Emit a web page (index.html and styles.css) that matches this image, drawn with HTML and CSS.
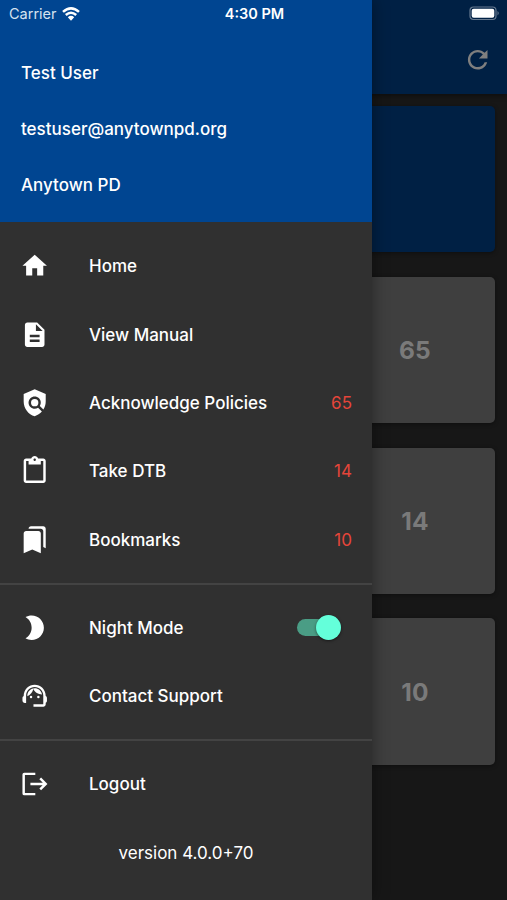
FILE: index.html
```
<!DOCTYPE html>
<html lang="en">
<head>
    <meta charset="UTF-8">
    <meta name="viewport" content="width=device-width, initial-scale=1.0">
    <title>Anytown PD</title>
    <link rel="stylesheet" href="styles.css">
</head>
<body>

    <div class="page">
        <header class="app-bar">
            <svg class="icon" viewBox="0 0 24 24"><path d="M17.65 6.35C16.2 4.9 14.21 4 12 4c-4.42 0-7.99 3.58-7.99 8s3.57 8 7.99 8c3.73 0 6.84-2.55 7.73-6h-2.08c-.82 2.33-3.04 4-5.65 4-3.31 0-6-2.69-6-6s2.69-6 6-6c1.66 0 3.14.69 4.22 1.78L13 11h7V4l-2.35 2.35z"/></svg>
        </header>
        <main class="cards">
            <div class="card card-blue"></div>
            <div class="card"><span class="count">65</span></div>
            <div class="card"><span class="count">14</span></div>
            <div class="card"><span class="count">10</span></div>
        </main>
    </div>

    <!-- Drawer -->
    <aside class="drawer">
        <div class="user">
            <p>Test User</p>
            <p>testuser@anytownpd.org</p>
            <p>Anytown PD</p>
        </div>
        <nav class="menu">
            <a class="item">
                <svg class="icon" viewBox="0 0 24 24"><path d="M10 20v-6h4v6h5v-8h3L12 3 2 12h3v8z"/></svg>
                <span class="label">Home</span>
            </a>
            <a class="item">
                <svg class="icon" viewBox="0 0 24 24"><path d="M14 2H6c-1.1 0-1.99.9-1.99 2L4 20c0 1.1.89 2 1.99 2H18c1.1 0 2-.9 2-2V8l-6-6zm2 16H8v-2h8v2zm0-4H8v-2h8v2zm-3-5V3.5L18.5 9H13z"/></svg>
                <span class="label">View Manual</span>
            </a>
            <a class="item">
                <svg class="icon" viewBox="0 0 24 24"><path d="M21 5l-9-4-9 4v6c0 5.55 3.84 10.74 9 12 2.3-.56 4.33-1.9 5.88-3.71l-3.12-3.12c-1.94 1.29-4.58 1.07-6.29-.64-1.95-1.95-1.95-5.12 0-7.07 1.95-1.95 5.12-1.95 7.07 0 1.71 1.71 1.92 4.35.64 6.29l2.9 2.9C20.29 15.69 21 13.38 21 11V5z"/><circle cx="12" cy="12" r="3"/></svg>
                <span class="label">Acknowledge Policies</span>
                <span class="badge">65</span>
            </a>
            <a class="item">
                <svg class="icon" viewBox="0 0 24 24"><path d="M19 2h-4.18C14.4.84 13.3 0 12 0c-1.3 0-2.4.84-2.82 2H5c-1.1 0-2 .9-2 2v16c0 1.1.9 2 2 2h14c1.1 0 2-.9 2-2V4c0-1.1-.9-2-2-2zm-7 0c.55 0 1 .45 1 1s-.45 1-1 1-1-.45-1-1 .45-1 1-1zm7 18H5V4h2v3h10V4h2v16z"/></svg>
                <span class="label">Take DTB</span>
                <span class="badge">14</span>
            </a>
            <a class="item">
                <svg class="icon" viewBox="0 0 24 24"><path d="M19 18l2 1V3c0-1.1-.9-2-2-2H8.99C7.89 1 7 1.9 7 3h10c1.1 0 2 .9 2 2v13zM15 5H5c-1.1 0-2 .9-2 2v16l7-3 7 3V7c0-1.1-.9-2-2-2z"/></svg>
                <span class="label">Bookmarks</span>
                <span class="badge">10</span>
            </a>
            <hr class="divider">
            <div class="item">
                <svg class="icon" viewBox="0 0 24 24"><path d="M9.5 2c-1.82 0-3.53.5-5 1.35 2.99 1.73 5 4.95 5 8.65s-2.01 6.92-5 8.65c1.47.85 3.18 1.35 5 1.35 5.52 0 10-4.48 10-10S15.02 2 9.5 2z"/></svg>
                <span class="label">Night Mode</span>
                <span class="switch"><span class="knob"></span></span>
            </div>
            <a class="item">
                <svg class="icon" viewBox="0 0 24 24"><path d="M21 12.22C21 6.73 16.74 3 12 3c-4.69 0-9 3.65-9 9.28-.6.34-1 .98-1 1.72v2c0 1.1.9 2 2 2h1v-6.1c0-3.87 3.13-7 7-7s7 3.13 7 7V19h-8v2h8c1.1 0 2-.9 2-2v-1.22c.59-.31 1-.92 1-1.64v-2.3c0-.7-.41-1.31-1-1.62z"/><circle cx="9" cy="13" r="1"/><circle cx="15" cy="13" r="1"/><path d="M18 11.03C17.52 8.18 15.04 6 12.05 6c-3.03 0-6.29 2.51-6.03 6.45 2.47-1.01 4.33-3.21 4.86-5.89 1.31 2.63 4 4.44 7.12 4.47z"/></svg>
                <span class="label">Contact Support</span>
            </a>
            <hr class="divider">
            <a class="item">
                <svg class="icon icon-line" viewBox="0 0 24 24"><path d="M12.500 4H3.500Q3 4 3 4.500V20Q3 20.500 3.500 20.500H12.500M8.500 12.200H20.500M16.500 7.700L21 12.200L16.500 16.700"/></svg>
                <span class="label">Logout</span>
            </a>
            <p class="version">version 4.0.0+70</p>
        </nav>
    </aside>

    <!-- Status bar -->
    <div class="status-bar">
        <div class="carrier">
            <span>Carrier</span>
            <svg class="wifi" viewBox="0 0 18 14"><path d="M1 4.900Q9-2.200 17 4.900M3.800 8Q9 3.500 14.200 8"/><path class="wifi-dot" d="M5.800 10.200Q9 7.500 12.200 10.200L9 13.700z"/></svg>
        </div>
        <span class="time">4:30 PM</span>
        <div class="battery">
            <svg viewBox="0 0 31 15"><rect class="battery-case" x="1" y="1" width="26" height="12.500" rx="3.500"/><rect class="battery-fill" x="2.700" y="2.700" width="22.600" height="9.100" rx="2"/><path class="battery-cap" d="M28.500 5Q31 7.200 28.500 9.500z"/></svg>
        </div>
    </div>

</body>
</html>
```
FILE: styles.css
```
* {
    box-sizing: border-box;
}
body {
    margin: 0;
    position: relative;
    height: 900px;
    overflow: hidden;
    background: #171717;
    color: #fff;
    font-family: Inter, "Liberation Sans", sans-serif;
    font-size: 17px;
}
p {
    margin: 0;
}
.icon {
    width: 29.4px;
    height: 29.4px;
    fill: currentColor;
    flex: none;
}
.icon-line {
    fill: none;
    stroke: currentColor;
    stroke-width: 2;
}

/* page behind the drawer */
.app-bar {
    display: flex;
    justify-content: flex-end;
    height: 94px;
    padding: 45px 15px 0 0;
    background: #002044;
    color: #7f7f7f;
    box-shadow: 0 2px 5px rgba(0, 0, 0, 0.4);
}
.cards {
    display: flex;
    flex-direction: column;
    gap: 24.5px;
    padding: 12px;
}
.card {
    display: flex;
    align-items: center;
    justify-content: flex-end;
    height: 146.3px;
    border-radius: 5px;
    background: #3f3f3f;
    box-shadow: 0 1px 4px rgba(0, 0, 0, 0.4);
}
.card-blue {
    background: #002044;
}
.count {
    width: 160px;
    padding-top: 1px;
    text-align: center;
    font-size: 24.5px;
    font-weight: 700;
    letter-spacing: 0.3px;
    color: #7a7a7a;
}

/* drawer */
.drawer {
    position: absolute;
    top: 0;
    left: 0;
    width: 372px;
    height: 900px;
    background: #303030;
    box-shadow: 0 0 16px rgba(0, 0, 0, 0.4);
}
.user {
    display: flex;
    flex-direction: column;
    gap: 32px;
    height: 222px;
    padding: 60.6px 21px 0;
    background: #004591;
    font-weight: 550;
    line-height: 24px;
}
.menu {
    padding-top: 9.8px;
}
.item {
    display: flex;
    align-items: center;
    height: 68.4px;
    padding: 0 20px;
}
.label {
    flex: 1;
    margin-left: 39.6px;
    padding-top: 0.5px;
    font-weight: 550;
}
.badge {
    color: #e5453a;
}
.divider {
    height: 2px;
    margin: 8.8px 0;
    border: none;
    background: #434343;
}
.switch {
    display: flex;
    align-items: center;
    justify-content: flex-end;
    width: 41px;
    height: 17px;
    margin-right: 14px;
    border-radius: 9px;
    background: #4a9d85;
}
.knob {
    width: 25px;
    height: 25px;
    margin-right: -3px;
    flex: none;
    border-radius: 50%;
    background: #64ffda;
    box-shadow: 0 1px 3px rgba(0, 0, 0, 0.5);
}
.version {
    padding-top: 1px;
    text-align: center;
    line-height: 69px;
}

/* status bar */
.status-bar {
    position: absolute;
    top: 0;
    left: 0;
    display: grid;
    grid-template-columns: 1fr auto 1fr;
    align-items: center;
    width: 507px;
    height: 27px;
    padding: 0 7px 0 9px;
    font-size: 14.5px;
}
.carrier {
    display: flex;
    align-items: center;
    gap: 5px;
    color: #d5e2ef;
}
.wifi {
    width: 18px;
    height: 14px;
    fill: none;
    stroke: #fff;
    stroke-width: 2.5;
}
.wifi-dot {
    fill: #fff;
    stroke: none;
}
.time {
    font-weight: 600;
}
.battery {
    display: flex;
    justify-content: flex-end;
}
.battery svg {
    width: 31px;
    height: 15px;
}
.battery-case {
    fill: none;
    stroke: #66798f;
    stroke-width: 1.2;
}
.battery-fill {
    fill: #fff;
}
.battery-cap {
    fill: #66798f;
}
```
